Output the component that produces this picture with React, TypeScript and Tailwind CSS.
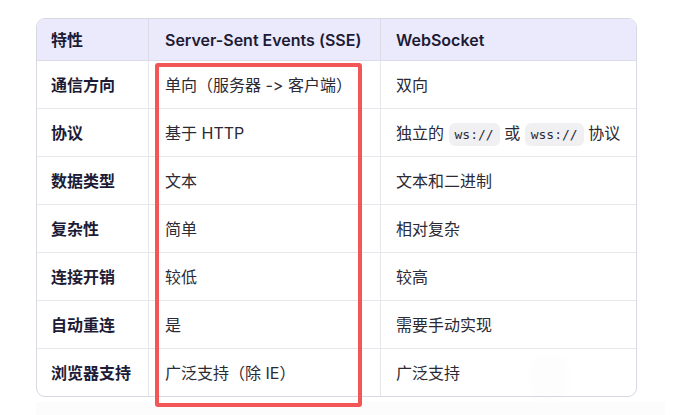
const rows: { k: string; sse: React.ReactNode; ws: React.ReactNode }[] = [
  { k: "通信方向", sse: "单向（服务器 -> 客户端）", ws: "双向" },
  {
    k: "协议",
    sse: "基于 HTTP",
    ws: (
      <span>
        独立的 <Code>ws://</Code> 或 <Code>wss://</Code> 协议
      </span>
    ),
  },
  { k: "数据类型", sse: "文本", ws: "文本和二进制" },
  { k: "复杂性", sse: "简单", ws: "相对复杂" },
  { k: "连接开销", sse: "较低", ws: "较高" },
  { k: "自动重连", sse: "是", ws: "需要手动实现" },
  { k: "浏览器支持", sse: "广泛支持（除 IE）", ws: "广泛支持" },
];

function Code({ children }: { children: React.ReactNode }) {
  return (
    <code className="rounded-[6px] bg-[#f0f0f3] px-[6px] py-[4px] font-['DejaVu_Sans_Mono',monospace] text-[13px] text-[#2b2a35]">
      {children}
    </code>
  );
}

export default function App() {
  return (
    <div className="relative h-[415px] w-[690px] overflow-hidden bg-white pl-[36px] pt-[18px] font-['Inter','Noto_Sans_CJK_SC',sans-serif] text-[16px] text-[#2b2a35] [font-feature-settings:'calt'_0,'liga'_0]">
      <div className="w-[601px] overflow-hidden rounded-[9px] border border-[#d8d7e2]">
        <div className="grid h-[42px] grid-cols-[112px_232px_255px] border-b border-[#dcdbe6] bg-[#ebeafc] font-semibold text-[#1d1b35]">
          <div className="flex items-center border-r border-[#dcdbe6] pl-[14px]">特性</div>
          <div className="flex items-center border-r border-[#dcdbe6] pl-4">Server-Sent Events (SSE)</div>
          <div className="flex items-center pl-[15px]">WebSocket</div>
        </div>
        {rows.map((r, i) => (
          <div
            key={r.k}
            className={
              i === rows.length - 1
                ? "grid h-[47px] grid-cols-[112px_232px_255px]"
                : "grid h-[48px] grid-cols-[112px_232px_255px] border-b border-[#e6e6eb]"
            }
          >
            <div className="flex items-center border-r border-[#e6e6eb] pl-[14px] font-semibold text-[#1d1b35]">{r.k}</div>
            <div className="flex items-center border-r border-[#e6e6eb] pl-4">{r.sse}</div>
            <div className="flex items-center whitespace-nowrap pl-[15px]">{r.ws}</div>
          </div>
        ))}
      </div>
      <div className="mt-[5px] h-[20px] w-[629px] bg-[#fcfcfc]" />
      <div className="absolute left-[530px] top-[355px] h-[45px] w-[38px] rounded-xl bg-black/[0.008] blur-[3px]" />
      <div className="absolute left-[155px] top-[63px] h-[344px] w-[207px] rounded-[3px] border-[4px] border-[#f25656]" />
    </div>
  );
}
